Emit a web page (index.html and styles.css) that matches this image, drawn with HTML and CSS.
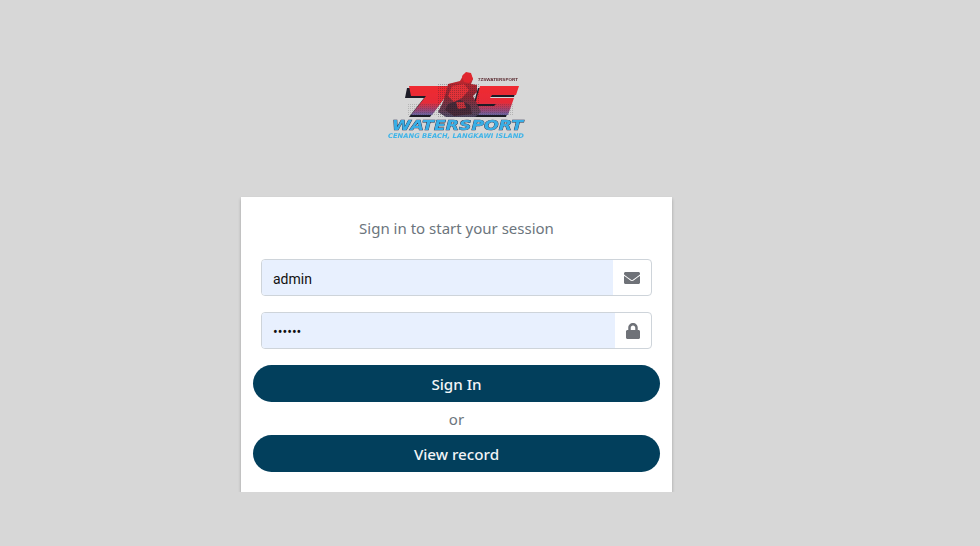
FILE: index.html
```html
<!DOCTYPE html>
<html lang="en">
<head>
  <meta charset="UTF-8">
  <title>Log in</title>
  <link rel="stylesheet" href="styles.css">
</head>
<body>

  <div class="login-box">
    <div class="login-logo">
      <svg class="logo" viewBox="0 0 136 66" width="136" height="66">
        <defs>
          <linearGradient id="numeral" gradientUnits="userSpaceOnUse" x1="0" y1="14" x2="0" y2="44">
            <stop offset="0" stop-color="#f02a30"/>
            <stop offset="0.55" stop-color="#e62c38"/>
            <stop offset="0.78" stop-color="#a04470"/>
            <stop offset="1" stop-color="#5f6cac"/>
          </linearGradient>
          <linearGradient id="rider" gradientUnits="userSpaceOnUse" x1="0" y1="0" x2="0" y2="46">
            <stop offset="0" stop-color="#d8262c"/>
            <stop offset="0.55" stop-color="#8c2832"/>
            <stop offset="1" stop-color="#4c4c68"/>
          </linearGradient>
          <pattern id="dots" width="2" height="2" patternUnits="userSpaceOnUse">
            <rect width="1" height="1" fill="#1c1c28"/>
          </pattern>
          <filter id="soft" x="-5%" y="-5%" width="110%" height="110%">
            <feGaussianBlur stdDeviation="0.4"/>
          </filter>
        </defs>
        <g filter="url(#soft)">
          <!-- 7 -->
          <polygon points="19,16 58,16 56,26 42,45 21,45 36,26 17,26" fill="#1e1e28"/>
          <polygon points="21,14 60,14 58,24 44,43 23,43 38,24 23,24" fill="url(#numeral)"/>
          <!-- 5 -->
          <polygon points="90,16 129,16 126,25 102,25 100,28 124,28 118,45 76,45 79,36 104,36 106,34 85,34" fill="#1e1e28"/>
          <polygon points="92,14 131,14 128,23 104,23 102,26 126,26 120,43 78,43 81,34 106,34 108,32 87,32" fill="url(#numeral)"/>
          <!-- rider -->
          <polygon points="60,12 72,9 76,2 82,1 85,7 83,12 89,13 89,20 85,24 89,32 93,40 87,45 58,45 50,40 55,30 58,20" fill="url(#rider)"/>
          <polygon points="74,4 78,0 83,1 85,7 81,11 76,10" fill="#e0282e"/>
          <polygon points="64,14 76,12 81,18 74,26 66,30 60,24" fill="#e23038"/>
          <polygon points="60,32 72,28 82,33 84,42 66,44 57,38" fill="#4a2a38"/>
          <polygon points="68,30 76,30 78,36 70,37" fill="#c8303a"/>
          <rect x="50" y="12" width="42" height="33" fill="url(#dots)" opacity="0.3"/>
          <rect x="20" y="32" width="106" height="12" fill="url(#dots)" opacity="0.2"/>
          <text class="logo-tag" x="90" y="9" textLength="40" lengthAdjust="spacingAndGlyphs">7ZSWATERSPORT</text>
          <text class="logo-name" x="4" y="57.5" textLength="131" lengthAdjust="spacingAndGlyphs">WATERSPORT</text>
          <text class="logo-sub" x="0" y="66" textLength="136" lengthAdjust="spacingAndGlyphs">CENANG BEACH, LANGKAWI ISLAND</text>
        </g>
      </svg>
    </div>

    <div class="card">
      <p class="login-msg">Sign in to start your session</p>
      <form>
        <div class="input-group">
          <input class="form-control" type="text" value="admin">
          <span class="addon addon-wide">
            <svg class="icon icon-envelope" viewBox="0 0 512 512"><path d="M502.3 190.8c3.9-3.1 9.7-.2 9.7 4.7V400c0 26.5-21.5 48-48 48H48c-26.5 0-48-21.5-48-48V195.6c0-5 5.7-7.8 9.7-4.7 22.4 17.4 52.1 39.5 154.1 113.6 21.1 15.4 56.7 47.8 92.2 47.6 35.7.3 72-32.8 92.3-47.6 102-74.1 131.6-96.3 154-113.7zM256 320c23.2.4 56.6-29.2 73.4-41.4 132.7-96.3 142.8-104.7 173.4-128.7 5.8-4.5 9.2-11.5 9.2-18.9v-19c0-26.5-21.5-48-48-48H48C21.5 64 0 85.5 0 112v19c0 7.4 3.4 14.3 9.2 18.9 30.6 23.9 40.7 32.4 173.4 128.7 16.8 12.2 50.2 41.8 73.4 41.4z"/></svg>
          </span>
        </div>
        <div class="input-group">
          <input class="form-control" type="password" value="123456">
          <span class="addon">
            <svg class="icon icon-lock" viewBox="0 0 448 512"><path d="M400 224h-24v-72C376 68.2 307.8 0 224 0S72 68.2 72 152v72H48c-26.5 0-48 21.5-48 48v192c0 26.5 21.5 48 48 48h352c26.5 0 48-21.5 48-48V272c0-26.5-21.5-48-48-48zm-104 0H152v-72c0-39.7 32.3-72 72-72s72 32.3 72 72v72z"/></svg>
          </span>
        </div>
        <div class="actions">
          <button class="btn" type="button">Sign In</button>
          <p class="or">or</p>
          <button class="btn" type="button">View record</button>
        </div>
      </form>
    </div>
  </div>

</body>
</html>
```

FILE: styles.css
```css
* {
  margin: 0;
  padding: 0;
  box-sizing: border-box;
}

body {
  font-family: "Noto Sans", sans-serif;
  background-color: #d7d7d7;
  color: #6c757d;
}

.login-box {
  width: 431px;
  margin-left: 241px;
  padding-top: 72px;
}

.login-logo {
  display: flex;
  justify-content: center;
  height: 125px;
  padding-right: 1px;
}

.logo {
  display: block;
  overflow: visible;
}

.logo-tag {
  font: bold 3.5px "Liberation Sans", sans-serif;
  fill: #5a2a30;
}

.logo-name {
  font: italic bold 14px "DejaVu Sans", sans-serif;
  fill: #38aee6;
  stroke: #1d2a48;
  stroke-width: 0.7px;
  paint-order: stroke;
}

.logo-sub {
  font: italic bold 6.5px "DejaVu Sans", sans-serif;
  fill: #3fb4e8;
}

.card {
  height: 295px;
  padding: 20px;
  background-color: #fff;
  box-shadow: 0 2px 3px rgba(0, 0, 0, 0.25);
}

.login-msg {
  font-size: 15px;
  line-height: 22px;
  text-align: center;
  margin-bottom: 20px;
}

.input-group {
  display: flex;
  height: 37px;
  margin-bottom: 16px;
  border: 1px solid #ced4da;
  border-radius: 4px;
  overflow: hidden;
}

.form-control {
  flex: 1;
  min-width: 0;
  padding: 2px 11px 0;
  border: none;
  outline: none;
  background-color: #e8f0fe;
  color: #111;
  font-family: Roboto, sans-serif;
  font-size: 14px;
}

.addon {
  display: flex;
  align-items: center;
  justify-content: center;
  width: 36px;
  padding-right: 1px;
}

.addon-wide {
  width: 38px;
}

.icon {
  display: block;
  fill: #6f7278;
}

.icon-envelope {
  width: 16px;
  height: 16px;
}

.icon-lock {
  width: 14px;
  height: 16px;
}

.actions {
  margin: 0 -8px;
}

.btn {
  display: block;
  width: 100%;
  height: 37px;
  border: none;
  border-radius: 19px;
  background-color: #023f5c;
  color: #f2f5f7;
  font-family: "Noto Sans", sans-serif;
  font-size: 15.2px;
  font-weight: 500;
  cursor: pointer;
}

.or {
  height: 33px;
  font-size: 15px;
  line-height: 34px;
  text-align: center;
}
```
